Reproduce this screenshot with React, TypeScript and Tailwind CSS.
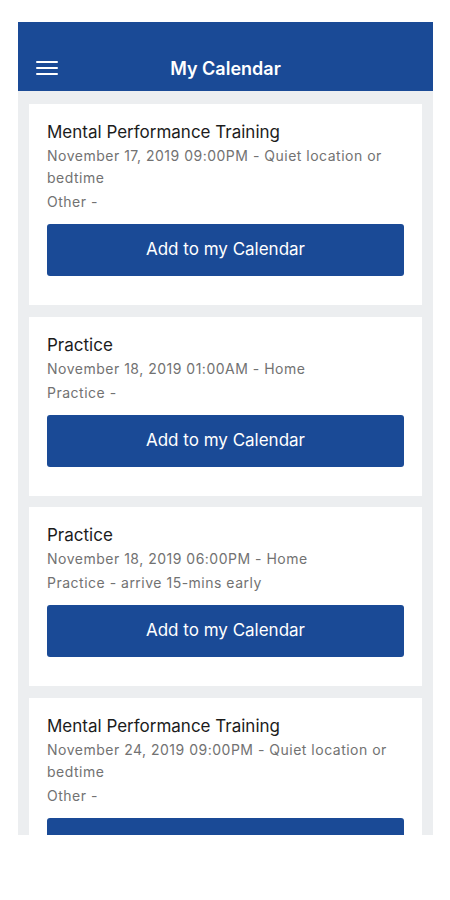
import React from "react";

type Item = { title: string; date: string; sub: string };

const items: Item[] = [
  {
    title: "Mental Performance Training",
    date: "November 17, 2019 09:00PM - Quiet location or bedtime",
    sub: "Other -",
  },
  { title: "Practice", date: "November 18, 2019 01:00AM - Home", sub: "Practice -" },
  {
    title: "Practice",
    date: "November 18, 2019 06:00PM - Home",
    sub: "Practice - arrive 15-mins early",
  },
  {
    title: "Mental Performance Training",
    date: "November 24, 2019 09:00PM - Quiet location or bedtime",
    sub: "Other -",
  },
];

function Card({ item }: { item: Item }) {
  return (
    <div className="bg-white pl-[18px] pr-[18px] pt-[17px] pb-[29px] shrink-0">
      <div className="text-[17px] leading-[22px] text-[#1c1c1c]">{item.title}</div>
      <div className="mt-[2px] text-[14px] leading-[22px] tracking-[0.5px] text-[#727272]">{item.date}</div>
      <div className="mt-[2px] text-[14px] leading-[22px] tracking-[0.5px] text-[#727272]">{item.sub}</div>
      <button className="mt-[11px] w-full h-[52px] rounded-[3px] bg-[#1a4a96] text-white text-[17px] flex items-center justify-center">
        Add to my Calendar
      </button>
    </div>
  );
}

export default function App() {
  return (
    <div
      className="w-[450px] h-[900px] bg-white pt-[22px] pl-[18px]"
      style={{ fontFamily: "Inter, 'Liberation Sans', sans-serif" }}
    >
      <div className="w-[415px] h-[813px] bg-[#eceef0] overflow-hidden flex flex-col">
        <div className="h-[69px] bg-[#1a4a96] shrink-0 pt-[34px] px-[18px] relative">
          <div className="h-[24px] flex items-center">
            <div className="flex flex-col gap-[4px] w-[22px]">
              <span className="block h-[2px] bg-white rounded-full" />
              <span className="block h-[2px] bg-white rounded-full" />
              <span className="block h-[2px] bg-white rounded-full" />
            </div>
            <div className="flex-1 text-center text-white text-[18px] font-semibold pr-[22px]">
              My Calendar
            </div>
          </div>
        </div>
        <div className="px-[11px] pt-[13px] flex flex-col gap-[11.5px]">
          {items.map((it, i) => (
            <Card key={i} item={it} />
          ))}
        </div>
      </div>
    </div>
  );
}
